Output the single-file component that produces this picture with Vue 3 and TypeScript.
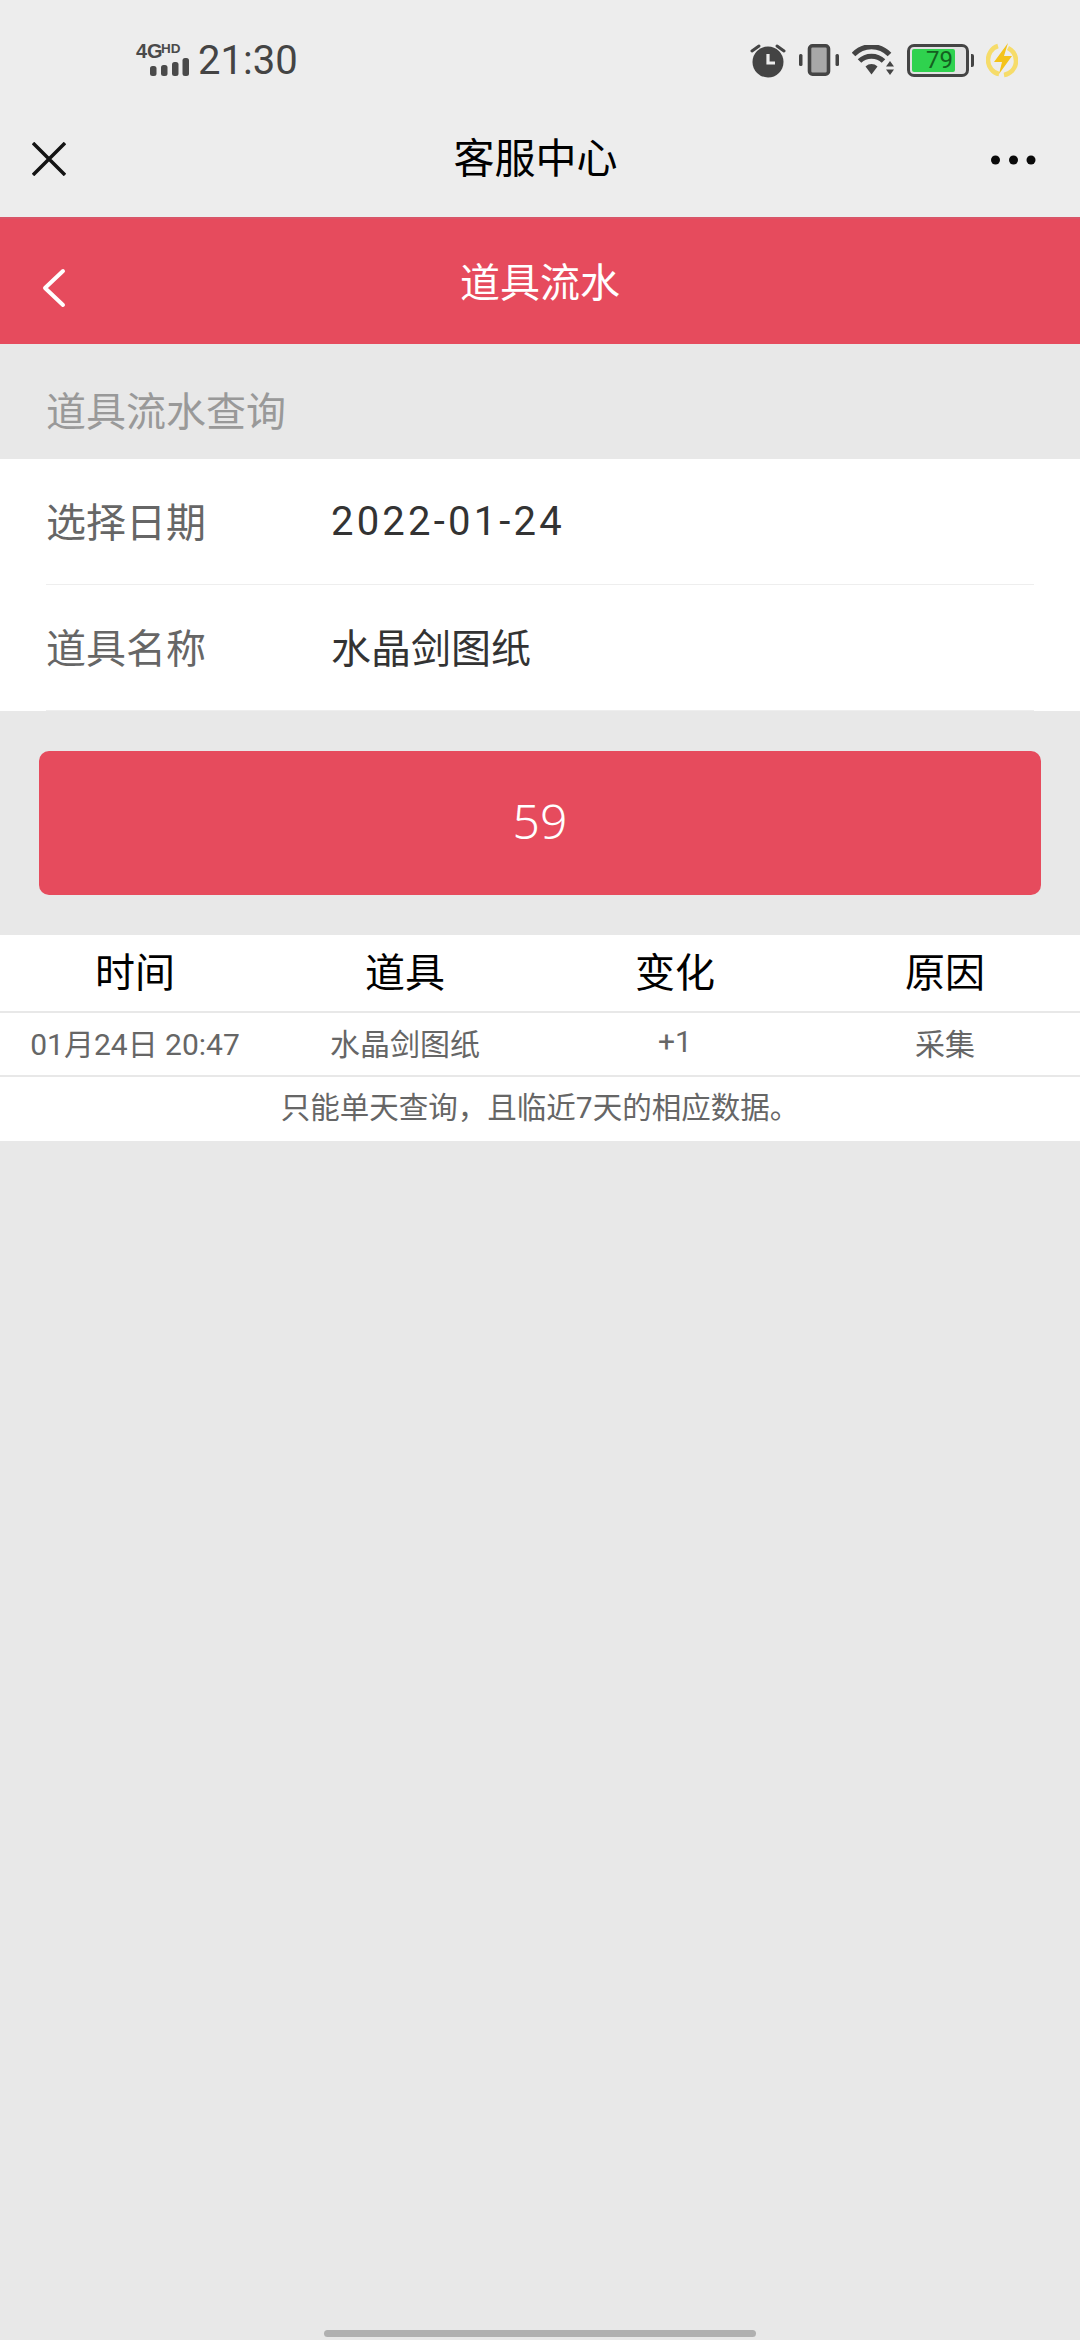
<script setup lang="ts">
const columns: string[] = ['时间', '道具', '变化', '原因']
const record: string[] = ['01月24日 20:47', '水晶剑图纸', '+1', '采集']
</script>

<template>
  <div class="page">
    <div class="top">
      <div class="status">
        <svg class="net" width="56" height="36" viewBox="0 0 56 36">
          <text x="1" y="16" class="net-4g">4G</text>
          <text x="26" y="11" class="net-hd">HD</text>
          <rect x="15" y="24" width="6.500" height="10" rx="2.500" fill="#4a4a4a" />
          <rect x="26" y="23" width="6.500" height="11" rx="2.500" fill="#4a4a4a" />
          <rect x="37" y="20" width="6.500" height="14" rx="2.500" fill="#4a4a4a" />
          <rect x="47.500" y="16" width="6.500" height="18" rx="2.500" fill="#4a4a4a" />
        </svg>
        <span class="clock">21:30</span>
        <div class="status-icons">
          <svg width="36" height="36" viewBox="0 0 36 36">
            <circle cx="18" cy="20" r="15.500" fill="#444" />
            <path d="M18 12v9h7" fill="none" stroke="#ededed" stroke-width="3.200" />
            <path d="M2 9l7-5M34 9l-7-5" stroke="#444" stroke-width="3" stroke-linecap="round" />
          </svg>
          <svg width="42" height="32" viewBox="0 0 42 32">
            <rect x="1" y="10" width="3.500" height="12" rx="1.500" fill="#444" />
            <rect x="37.500" y="10" width="3.500" height="12" rx="1.500" fill="#444" />
            <rect x="11.500" y="1.800" width="19" height="28.400" rx="3" fill="#a8a8a8" stroke="#444" stroke-width="3.600" />
          </svg>
          <svg width="43" height="30" viewBox="0 0 43 30">
            <path d="M1.500 9.500C11.500-1 27.500-1 37.500 9.500" fill="none" stroke="#444" stroke-width="5" />
            <path d="M7.500 16C14 9.500 25 9.500 31.500 16" fill="none" stroke="#444" stroke-width="5" />
            <path d="M13.500 21.500c3.500-3.300 8.500-3.300 12 0l-6 8z" fill="#444" />
            <path d="M38 16l4 5.500h-8zM38 30l4-5.500h-8z" fill="#444" />
          </svg>
          <div class="battery">
            <div class="battery-body">
              <div class="battery-fill"></div>
              <span class="battery-num">79</span>
            </div>
            <div class="battery-tip"></div>
          </div>
          <svg class="bolt" width="32" height="36" viewBox="0 0 32 36">
            <path d="M12 4C5 6 2 13 2 18c0 7 5 13 11 14" fill="none" stroke="#f6dc6a" stroke-width="4.500" />
            <path d="M22 6c6 3 8 8 8 13 0 8-6 13-12 14" fill="none" stroke="#f6dc6a" stroke-width="4.500" />
            <path d="M22 1L8 20h8l-3 12 13-18h-8l4-13z" fill="#f4c31a" />
          </svg>
        </div>
      </div>
      <div class="nav">
        <svg class="nav-close" width="34" height="34" viewBox="0 0 34 34">
          <path d="M1 1l32 32M33 1L1 33" stroke="#141414" stroke-width="3.500" />
        </svg>
        <span class="nav-title">客服中心</span>
        <svg class="nav-more" width="45" height="10" viewBox="0 0 45 10">
          <circle cx="4.500" cy="5" r="4.500" fill="#0a0a0a" />
          <circle cx="22.500" cy="5" r="4.500" fill="#0a0a0a" />
          <circle cx="40" cy="5" r="4.500" fill="#0a0a0a" />
        </svg>
      </div>
    </div>

    <header class="banner">
      <svg class="back" width="24" height="40" viewBox="0 0 24 40">
        <path d="M21 3L3 20l18 17" fill="none" stroke="#fff" stroke-width="4" stroke-linecap="round" stroke-linejoin="round" />
      </svg>
      <span class="banner-title">道具流水</span>
    </header>

    <div class="section-title">道具流水查询</div>

    <div class="form">
      <div class="form-row">
        <span class="form-label">选择日期</span>
        <span class="form-value form-date">2022-01-24</span>
      </div>
      <div class="form-row">
        <span class="form-label">道具名称</span>
        <span class="form-value">水晶剑图纸</span>
      </div>
    </div>

    <div class="action">
      <button class="submit" type="button">59</button>
    </div>

    <div class="table">
      <div class="table-row table-head">
        <span v-for="c in columns" :key="c">{{ c }}</span>
      </div>
      <div class="table-row table-body">
        <span v-for="r in record" :key="r">{{ r }}</span>
      </div>
      <div class="table-note">只能单天查询，且临近7天的相应数据。</div>
    </div>

    <div class="home"></div>
  </div>
</template>

<style scoped>
.page {
  width: 1080px;
  height: 2340px;
  display: flex;
  flex-direction: column;
  background: #e8e8e8;
  overflow: hidden;
  font-family: "Noto Sans", "Noto Sans CJK SC", sans-serif;
}
.top {
  background: #ededed;
}
.status {
  height: 104px;
  box-sizing: border-box;
  padding: 16px 62px 0 135px;
  display: flex;
  align-items: center;
}
.net {
  overflow: visible;
}
.net-4g {
  font: 700 20px "Liberation Sans", sans-serif;
  fill: #4a4a4a;
}
.net-hd {
  font: 700 13.500px "Liberation Sans", sans-serif;
  fill: #4a4a4a;
}
.clock {
  margin-left: 7px;
  font: 400 40px Roboto, sans-serif;
  color: #444;
}
.status-icons {
  margin-left: auto;
  display: flex;
  align-items: center;
  gap: 12px;
}
.battery {
  display: flex;
  align-items: center;
}
.battery-body {
  width: 62px;
  height: 33px;
  box-sizing: border-box;
  border: 3px solid #444;
  border-radius: 7px;
  padding: 2px;
  position: relative;
  background: #e2e2e2;
}
.battery-fill {
  width: 43px;
  height: 100%;
  background: #2fd24e;
  border-radius: 2px;
}
.battery-num {
  position: absolute;
  left: 16px;
  top: -2px;
  font: 400 24px/30px Roboto, sans-serif;
  color: #14601f;
}
.battery-tip {
  width: 3px;
  height: 13px;
  margin-left: 2px;
  background: #444;
  border-radius: 0 2px 2px 0;
}
.nav {
  height: 113px;
  box-sizing: border-box;
  display: flex;
  align-items: center;
  padding: 0 44px 0 32px;
}
.nav-close {
  flex: none;
  margin-bottom: 4px;
}
.nav-title {
  flex: 1;
  text-align: center;
  font-size: 41px;
  font-weight: 400;
  line-height: 60px;
  color: #000;
  margin-left: 14px;
  margin-bottom: 7px;
}
.nav-more {
  flex: none;
  margin-bottom: 2px;
}
.banner {
  height: 127px;
  background: #e64b5d;
  border-top: 2px solid #d95568;
  box-sizing: border-box;
  display: flex;
  align-items: center;
  justify-content: center;
  position: relative;
}
.banner-title {
  font-size: 40px;
  color: #fff;
  margin-bottom: 4px;
}
.back {
  position: absolute;
  left: 42px;
  top: 49px;
}
.section-title {
  height: 115px;
  box-sizing: border-box;
  padding: 37px 0 0 46px;
  font-size: 40px;
  line-height: 60px;
  color: #999;
}
.form {
  background: #fff;
  padding-left: 46px;
  padding-right: 46px;
}
.form-row {
  height: 126px;
  display: flex;
  align-items: center;
  border-bottom: 1px solid #eee;
  box-sizing: border-box;
  padding-bottom: 4px;
}
.form-label {
  width: 285px;
  font-size: 40px;
  color: #666;
}
.form-value {
  font-size: 40px;
  color: #333;
}
.form-date {
  font-family: Roboto, sans-serif;
  font-weight: 400;
  letter-spacing: 3.200px;
  padding-top: 3px;
}
.action {
  padding: 40px 39px;
}
.submit {
  display: block;
  width: 100%;
  height: 144px;
  border: 0;
  border-radius: 10px;
  padding: 0 0 5px;
  background: #e64b5d;
  color: #fff;
  font: 300 48px "Noto Sans", sans-serif;
}
.table {
  background: #fff;
}
.table-row {
  display: grid;
  grid-template-columns: repeat(4, 1fr);
  align-items: center;
  text-align: center;
}
.table-head {
  height: 76px;
  box-sizing: border-box;
  padding-bottom: 7px;
  font-size: 40px;
  color: #000;
}
.table-body {
  height: 66px;
  box-sizing: border-box;
  border-top: 2px solid #e8e8e8;
  border-bottom: 2px solid #e8e8e8;
  padding-bottom: 5px;
  font-family: Roboto, "Noto Sans CJK SC", sans-serif;
  font-size: 30px;
  color: #666;
}
.table-note {
  height: 64px;
  line-height: 59px;
  text-align: center;
  font-size: 29.500px;
  color: #666;
}
.home {
  margin-top: auto;
  margin-bottom: 3px;
  align-self: center;
  width: 432px;
  height: 7px;
  border-radius: 4px;
  background: #b0b0b0;
}
</style>
